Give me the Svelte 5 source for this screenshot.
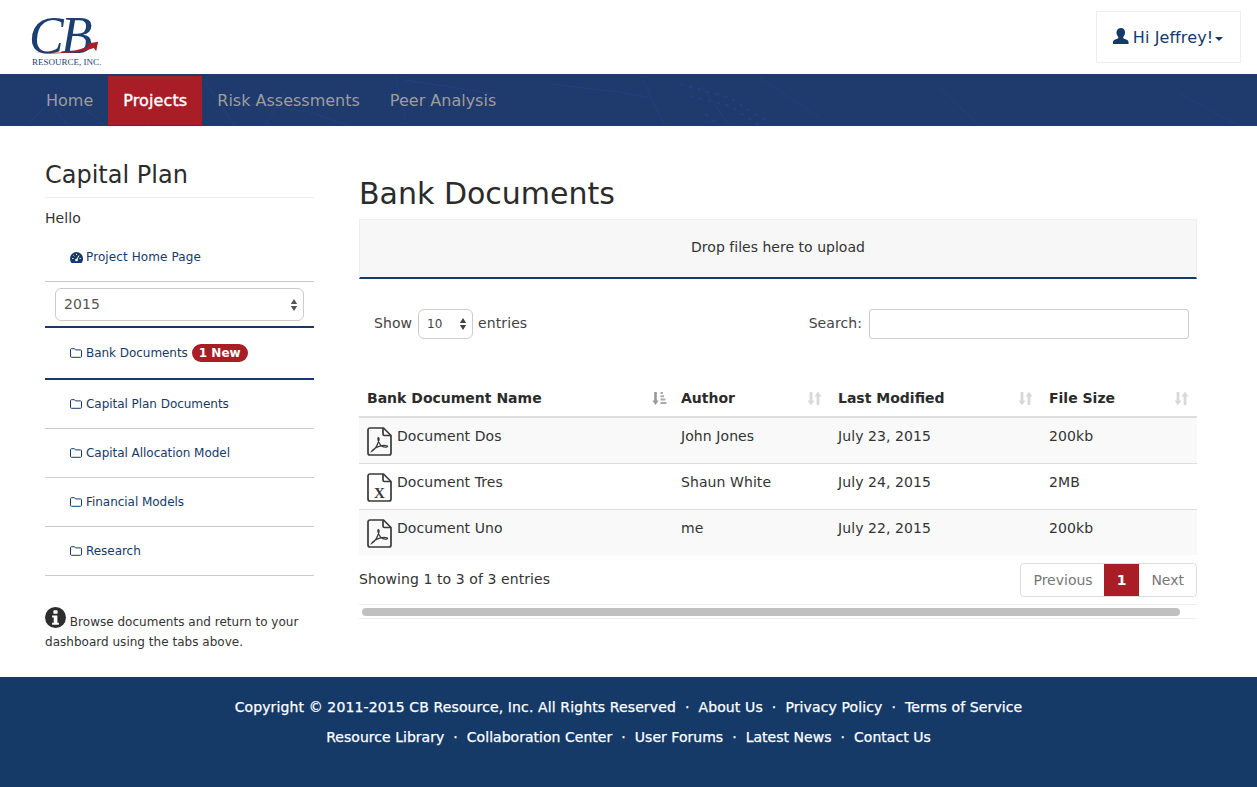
<script>
  const sideItems = ['Capital Plan Documents', 'Capital Allocation Model', 'Financial Models', 'Research'];
  const rows = [
    { name: 'Document Dos', kind: 'pdf', author: 'John Jones', date: 'July 23, 2015', size: '200kb' },
    { name: 'Document Tres', kind: 'xls', author: 'Shaun White', date: 'July 24, 2015', size: '2MB' },
    { name: 'Document Uno', kind: 'pdf', author: 'me', date: 'July 22, 2015', size: '200kb' }
  ];
  const cols = [
    { label: 'Bank Document Name', cls: 'c1', active: true },
    { label: 'Author', cls: 'c2' },
    { label: 'Last Modified', cls: 'c3' },
    { label: 'File Size', cls: 'c4' }
  ];
  const footer1 = ['About Us', 'Privacy Policy', 'Terms of Service'];
  const footer2 = ['Collaboration Center', 'User Forums', 'Latest News', 'Contact Us'];
</script>

{#snippet folder()}
  <svg class="folder" viewBox="0 0 12 10" width="12" height="10"><path d="M1.500 .7h3l1 1.200h5a1 1 0 0 1 1 1v5.400a1 1 0 0 1-1 1h-9a1 1 0 0 1-1-1V1.600a1 1 0 0 1 1-.9z" fill="none" stroke="#163a68" stroke-width="1"/></svg>
{/snippet}

{#snippet selectArrows(color)}
  <svg class="arrows" viewBox="0 0 8 14" width="8" height="14"><path d="M4 1l3.200 5H.8zM4 13L.8 8h6.400z" fill={color}/></svg>
{/snippet}

{#snippet sortIcon(active)}
  <svg class="sort" viewBox="0 0 15 15" width="15" height="15">
    {#if active}
      <path d="M3.500 1v9" stroke="#999" stroke-width="2.600"/><path d="M.3 9.500h6.400L3.500 14z" fill="#999"/>
      <path d="M8.500 2h2.500M8.500 5.300h3.500M8.500 8.600h5M8.500 12h6" stroke="#aaa" stroke-width="2"/>
    {:else}
      <path d="M4 1v9" stroke="#d8d8d8" stroke-width="2.800"/><path d="M.6 9.500h6.800L4 14.500z" fill="#d8d8d8"/>
      <path d="M11 14V5" stroke="#d8d8d8" stroke-width="2.800"/><path d="M7.600 5.500h6.800L11 .5z" fill="#d8d8d8"/>
    {/if}
  </svg>
{/snippet}

{#snippet fileIcon(kind)}
  <svg class="file" viewBox="0 0 25 29" width="25" height="29">
    <path d="M1 3a2 2 0 0 1 2-2h13.500L24 8.500V26a2 2 0 0 1-2 2H3a2 2 0 0 1-2-2z" fill="none" stroke="#3a3a3a" stroke-width="1.700"/>
    <path d="M16 1v6a1.500 1.500 0 0 0 1.500 1.500H24" fill="none" stroke="#3a3a3a" stroke-width="1.700"/>
    {#if kind === 'pdf'}
      <path d="M4.500 24.500c3-1.500 6-6.500 7.500-11.500.4-1.800-.6-3-1.100-2-.6 1.800 1.800 7 4 8.300 2 1 5.300 1.200 5.600.2.200-1-3.500-1.400-6.500-.7-3.300.7-8.500 3.500-9.500 5.700z" fill="none" stroke="#3a3a3a" stroke-width="1.200"/>
    {:else}
      <text class="x" x="12.500" y="25" text-anchor="middle">X</text>
    {/if}
  </svg>
{/snippet}

<div class="page">
  <header class="top">
    <div class="logo">
      <span class="cb">CB</span>
      <svg class="swoosh" viewBox="0 0 72 14" width="69" height="13">
        <path d="M1 12.500c26 1.500 46-1 59-7l-2.500-2.500L70 .8 68 11l-2.600-3.400C50 13.500 24 14.500 1 12.500z" fill="#a81d26"/>
      </svg>
      <span class="res">RESOURCE, INC.</span>
    </div>
    <button class="user">
      <svg viewBox="0 0 17 17" width="16" height="16"><path d="M8.500 0c2.700 0 4.300 2.200 4.300 4.900 0 1.800-.7 3.400-1.700 4.400-.5.600-.4 1.400.3 1.800l3.300 1.500c1.200.5 1.800 1.200 1.800 2.400v1.900H0v-1.900c0-1.200.6-1.900 1.800-2.400l3.300-1.500c.7-.4.800-1.200.3-1.800-1-1-1.700-2.600-1.700-4.400C3.700 2.200 5.800 0 8.500 0z" fill="#163a68"/></svg>
      <span>Hi Jeffrey!</span>
      <i class="caret"></i>
    </button>
  </header>

  <nav class="nav">
    <svg class="texture" viewBox="0 0 1257 52" width="1257" height="52" aria-hidden="true">
      <g fill="none" stroke="#2c53a0" stroke-width="1" opacity=".3">
        <path d="M205 8l30 44M250 30l60 8 40 14M395 0l12 52M405 6l90 14M265 52l20-34"/>
        <path d="M550 10l70 8 30 6M640 0l25 52M700 10l30 42M760 4l60 40M940 14l40 38M1180 20l60 32"/>
        <path d="M30 48l20-20 18 24M80 30l25 22M110 40l40 12"/>
      </g>
      <g fill="none" stroke="#2c53a0" stroke-width="2.500" opacity=".25" stroke-dasharray="4 5">
        <path d="M680 10l50 14 35 22M690 22l40 10 30 20M705 40l15 12"/>
      </g>
    </svg>
    <a>Home</a>
    <a class="active">Projects</a>
    <a>Risk Assessments</a>
    <a>Peer Analysis</a>
  </nav>

  <div class="content">
    <aside class="side">
      <h3>Capital Plan</h3>
      <p class="hello">Hello</p>
      <div class="item home">
        <svg viewBox="0 0 13 11" width="13" height="11"><path d="M6.500 0A6.500 6.500 0 0 0 0 6.500c0 1.700.6 3.200 1.500 4.500h10a6.500 6.500 0 0 0 1.500-4.500A6.500 6.500 0 0 0 6.500 0z" fill="#163a68"/><path d="M6.500 8L9 3.500M2.200 6.500h1.300M3.400 3.300l.9.9M6.500 1.800V3M9.500 6.500h1.300" stroke="#fff" stroke-width="1"/><circle cx="6.500" cy="8" r="1.300" fill="#fff"/></svg>
        <span>Project Home Page</span>
      </div>
      <div class="year">
        <div class="sel"><span class="yr">2015</span>{@render selectArrows('#555')}</div>
      </div>
      <div class="item current">
        {@render folder()}<span>Bank Documents</span><b class="badge">1 New</b>
      </div>
      {#each sideItems as s}
        <div class="item">{@render folder()}<span>{s}</span></div>
      {/each}
      <p class="note">
        <svg viewBox="0 0 20 20" width="21" height="21"><circle cx="10" cy="10" r="10" fill="#2d2d2d"/><rect x="8" y="3" width="4" height="3.500" rx=".8" fill="#fff"/><path d="M6.800 8h5v7h1.400v2H6.800v-2h1.500v-5H6.800z" fill="#fff"/></svg>
        Browse documents and return to your dashboard using the tabs above.
      </p>
    </aside>

    <main class="main">
      <h1>Bank Documents</h1>
      <div class="drop">Drop files here to upload</div>

      <div class="controls">
        <div class="show">Show <div class="sel small"><span>10</span>{@render selectArrows('#444')}</div> entries</div>
        <div class="search">Search: <div class="input"></div></div>
      </div>

      <div class="table">
        <div class="row head">
          {#each cols as c}
            <div class={c.cls}><span>{c.label}</span>{@render sortIcon(c.active)}</div>
          {/each}
        </div>
        {#each rows as r, i}
          <div class="row body" class:odd={i % 2 === 0}>
            <div class="c1">{@render fileIcon(r.kind)}<span>{r.name}</span></div>
            <div class="c2">{r.author}</div>
            <div class="c3">{r.date}</div>
            <div class="c4">{r.size}</div>
          </div>
        {/each}
      </div>

      <div class="info">
        <span>Showing 1 to 3 of 3 entries</span>
        <div class="pager"><a class="prev">Previous</a><a class="on">1</a><a>Next</a></div>
      </div>
      <div class="scroll"><div class="thumb"></div></div>
    </main>
  </div>

  <footer class="foot">
    <div class="line one">
      <span>Copyright © 2011-2015 CB Resource, Inc. All Rights Reserved</span>
      {#each footer1 as f}<i>·</i><span>{f}</span>{/each}
    </div>
    <div class="line">
      <span>Resource Library</span>
      {#each footer2 as f}<i>·</i><span>{f}</span>{/each}
    </div>
  </footer>
</div>

<style>
  :global(body) { margin: 0; background: #fff; }
  .page { width: 1257px; height: 787px; display: flex; flex-direction: column; overflow: hidden; font-family: "DejaVu Sans", Verdana, sans-serif; font-size: 14px; letter-spacing: .08px; color: #333; }
  .top { height: 74px; flex: none; display: flex; justify-content: space-between; padding: 11px 16px 0 31px; box-sizing: border-box; }
  .logo { position: relative; width: 72px; height: 56px; color: #1b3f71; }
  .cb { display: block; font: italic 52px/40px "Liberation Serif", serif; letter-spacing: -3px; margin: 5px 0 0 -2px; }
  .swoosh { position: absolute; left: 1px; top: 30px; }
  .res { position: absolute; left: 1px; top: 45px; font: 9px/12px "Liberation Serif", serif; white-space: nowrap; letter-spacing: 0; }
  .user { height: 52px; width: 145px; background: #fff; border: 1px solid #eee; display: flex; align-items: center; justify-content: center; gap: 4px; padding: 0 0 0; color: #163a68; font: 16px "DejaVu Sans", sans-serif; letter-spacing: .1px; }
  .user svg { margin-top: -2px; margin-left: -1px; }
  .caret { width: 0; height: 0; border: 4px solid transparent; border-top-color: #163a68; border-bottom: 0; margin: 3px 0 0 -2px; }
  .nav { position: relative; height: 52px; flex: none; display: flex; padding: 2px 0 1px 31px; box-sizing: border-box; background: #1f3a6c; font-size: 16px; letter-spacing: 0; }
  .texture { position: absolute; left: 0; top: 0; }
  .nav a { position: relative; display: flex; align-items: center; padding: 0 15px; color: #9d9d9d; }
  .nav a.active { background: #a81d26; color: #fff; font-weight: 500; -webkit-text-stroke: .4px #fff; letter-spacing: .12px; }
  .content { flex: 1; display: flex; gap: 45px; padding: 0 60px 0 45px; min-height: 0; }
  .side { width: 269px; flex: none; }
  h3 { font-size: 24px; font-weight: 400; line-height: 30px; margin: 34px 0 0; padding-bottom: 7px; border-bottom: 1px solid #eee; color: #2b2b2b; letter-spacing: 0; }
  .hello { margin: 10px 0 0; line-height: 20px; }
  .item { display: flex; align-items: center; gap: 4px; height: 48px; padding-left: 25px; border-bottom: 1px solid #ccc; font-size: 12px; color: #163a68; letter-spacing: -.04px; }
  .home { margin-top: 5px; gap: 3px; letter-spacing: .1px; }
  .folder { flex: none; }
  .year { padding: 6px 10px 5px; border-bottom: 2px solid #163a68; }
  .sel { display: flex; align-items: center; justify-content: space-between; height: 31px; padding: 0 5px 0 8px; border: 1px solid #ccc; border-radius: 6px; color: #555; font-size: 14px; }
  .yr { margin-top: -2px; }
  .current { height: 50px; border-bottom: 2px solid #163a68; }
  .badge { background: #a81d26; color: #fff; font-size: 12px; line-height: 18px; padding: 0 7px; border-radius: 9px; font-weight: 700; letter-spacing: 0; }
  .note { margin: 31px 0 0; font-size: 12px; line-height: 20px; color: #333; letter-spacing: .02px; }
  .note svg { vertical-align: -2px; }
  .main { flex: 1; min-width: 0; }
  h1 { font-size: 30px; font-weight: 400; line-height: 36px; margin: 50px 0 7px; color: #2b2b2b; letter-spacing: 0; }
  .drop { display: flex; align-items: center; justify-content: center; background: #f7f7f7; border: 1px solid #eee; border-bottom: 2px solid #163a68; box-sizing: border-box; height: 60px; padding-bottom: 4px; color: #333; letter-spacing: .02px; }
  .controls { display: flex; justify-content: space-between; align-items: center; padding: 27px 8px 0 15px; height: 33px; color: #333; }
  .show, .search { display: flex; align-items: center; gap: 5px; color: #444; }
  .search { gap: 7px; }
  .small { width: 55px; height: 30px; box-sizing: border-box; font-size: 12px; padding: 0 5px 0 8px; color: #444; margin: 2px 0 0 1px; }
  .input { width: 318px; height: 28px; border: 1px solid #ccc; border-radius: 3px; margin-top: 2px; }
  .table { margin-top: 41px; }
  .row { display: grid; grid-template-columns: 314px 157px 211px 1fr; }
  .row > div { padding: 0 8px; min-width: 0; }
  .head { height: 38px; border-bottom: 2px solid #ddd; box-sizing: border-box; align-items: center; font-weight: 700; color: #2b2b2b; letter-spacing: 0; }
  .head > div { display: flex; align-items: center; justify-content: space-between; }
  .head .c1 { padding-right: 6px; }
  .sort { flex: none; }
  .body { height: 46px; box-sizing: border-box; border-bottom: 1px solid #ddd; padding-top: 8px; color: #333; line-height: 20px; }
  .body:last-child { border-bottom: 0; height: 45px; }
  .odd { background: #f9f9f9; }
  .body .c1 { display: flex; align-items: flex-start; gap: 5px; }
  .file { flex: none; margin-top: 1px; }
  .x { font: 700 15px "Liberation Serif", serif; fill: #3a3a3a; }
  .info { display: flex; justify-content: space-between; align-items: flex-start; padding-top: 8px; color: #333; }
  .info > span { line-height: 34px; margin-top: -1px; }
  .pager { display: flex; height: 34px; border: 1px solid #ddd; border-radius: 4px; box-sizing: border-box; overflow: hidden; color: #777; letter-spacing: 0; }
  .pager a { display: flex; align-items: center; padding: 0 12px; }
  .pager a.prev { padding-right: 11px; }
  .pager a.on { background: #a81d26; color: #fff; font-weight: 700; padding: 0 13px; }
  .scroll { height: 15px; margin-top: 7px; border: 1px solid #eee; border-width: 1px 0; padding: 3px 3px 0; box-sizing: border-box; }
  .thumb { height: 8px; width: 818px; background: #c0c0c0; border-radius: 4px; }
  .foot { flex: none; height: 110px; background: #163a68; color: #fff; padding-top: 15px; box-sizing: border-box; }
  .line { display: flex; justify-content: center; gap: 9px; line-height: 30px; font-size: 14px; letter-spacing: .03px; -webkit-text-stroke: .25px #fff; }
  .line.one { letter-spacing: .12px; }
  .line i { font-style: normal; }
</style>
